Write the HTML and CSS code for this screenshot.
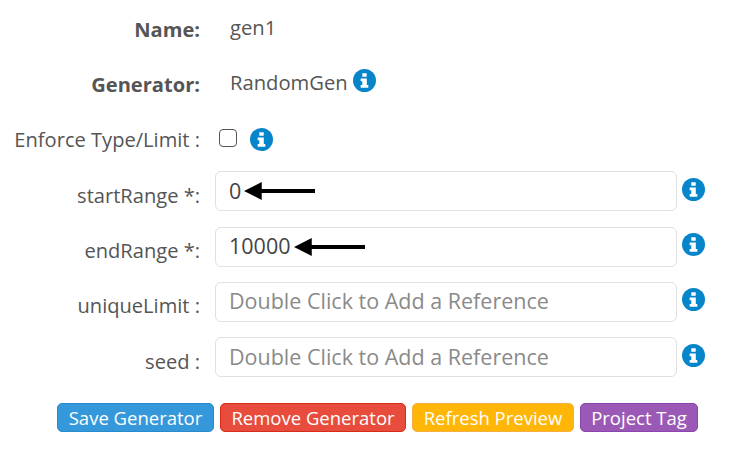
FILE: index.html
```html
<!DOCTYPE html>
<html lang="en">
<head>
    <meta charset="UTF-8">
    <meta name="viewport" content="width=device-width, initial-scale=1.0">
    <title>Generator</title>
    <link rel="stylesheet" href="styles.css">
</head>
<body>
    <svg class="icon-defs" width="0" height="0">
        <symbol id="info" viewBox="0 0 24 24">
            <circle cx="12" cy="12" r="12" fill="#0785cb"/>
            <path fill="#fff" d="M9.7 4.4h4.6v3.7H9.7zM8 10h6.4v6.6H16v2.9H8v-2.9h1.7v-3.7H8z"/>
        </symbol>
    </svg>
    <div class="form">
        <div class="row">
            <label class="name-label strong">Name:</label>
            <span class="value">gen1</span>
        </div>
        <div class="row">
            <label class="name-label strong">Generator:</label>
            <span class="value">RandomGen</span>
            <svg class="info info-inline"><use href="#info"/></svg>
        </div>
        <div class="row">
            <label class="name-label">Enforce Type/Limit :</label>
            <input type="checkbox" class="check">
            <svg class="info info-check"><use href="#info"/></svg>
        </div>
        <div class="row">
            <label class="name-label">startRange *:</label>
            <div class="field">
                <input type="text" class="text-input" value="0">
                <svg class="arrow arrow-start" viewBox="0 0 72 18" preserveAspectRatio="none"><path d="M0 9 18 0v7h54v4H18v7z"/></svg>
            </div>
            <svg class="info info-field"><use href="#info"/></svg>
        </div>
        <div class="row">
            <label class="name-label">endRange *:</label>
            <div class="field">
                <input type="text" class="text-input" value="10000">
                <svg class="arrow arrow-end" viewBox="0 0 72 18" preserveAspectRatio="none"><path d="M0 9 18 0v7h54v4H18v7z"/></svg>
            </div>
            <svg class="info info-field"><use href="#info"/></svg>
        </div>
        <div class="row">
            <label class="name-label">uniqueLimit :</label>
            <div class="field">
                <input type="text" class="text-input" placeholder="Double Click to Add a Reference">
            </div>
            <svg class="info info-field"><use href="#info"/></svg>
        </div>
        <div class="row">
            <label class="name-label">seed :</label>
            <div class="field">
                <input type="text" class="text-input" placeholder="Double Click to Add a Reference">
            </div>
            <svg class="info info-field"><use href="#info"/></svg>
        </div>
        <div class="buttons">
            <button class="btn btn-blue">Save Generator</button>
            <button class="btn btn-red">Remove Generator</button>
            <button class="btn btn-yellow">Refresh Preview</button>
            <button class="btn btn-purple">Project Tag</button>
        </div>
    </div>
</body>
</html>
```

FILE: styles.css
```css
body {
    margin: 0;
    font-family: "Open Sans", sans-serif;
    font-size: 20.1px;
    color: #555;
    background-color: #fff;
}
.icon-defs {
    display: block;
}
.form {
    padding-top: 9px;
}
.row {
    display: flex;
    align-items: center;
    height: 40px;
    margin-bottom: 15.4px;
}
.name-label {
    flex: none;
    width: 200px;
    text-align: right;
}
.strong {
    font-weight: 700;
}
.value {
    margin-left: 30px;
    margin-bottom: 5px;
    font-size: 20.2px;
}
.info {
    flex: none;
    width: 23px;
    height: 23px;
    margin-left: 5px;
}
.info-inline {
    margin-bottom: 8px;
}
.info-check {
    margin-left: 13px;
}
.info-field {
    margin-bottom: 12px;
}
.check {
    appearance: none;
    flex: none;
    width: 18px;
    height: 18px;
    margin: 0 0 4px 19px;
    border: 1.5px solid #555;
    border-radius: 4px;
    background: #fff;
}
.field {
    position: relative;
    flex: none;
    width: 462px;
    height: 40px;
    margin: 0 0 8px 15px;
}
.text-input {
    box-sizing: border-box;
    width: 100%;
    height: 100%;
    padding: 0 13px 2px;
    border: 1.5px solid #e0e0e0;
    border-radius: 6px;
    font-family: inherit;
    font-size: 21.5px;
    color: #444;
}
.text-input::placeholder {
    color: #8a8a8a;
    opacity: 1;
}
.arrow {
    position: absolute;
    top: 11px;
    width: 71px;
    height: 18px;
}
.arrow-start {
    left: 29px;
}
.arrow-end {
    left: 79px;
}
.buttons {
    display: flex;
    gap: 6px;
    padding-left: 57px;
    margin-top: 22px;
}
.btn {
    height: 29px;
    padding: 0;
    border: 1px solid;
    border-radius: 5px;
    font-family: inherit;
    font-size: 18.5px;
    line-height: 1;
    color: #fff;
}
.btn-blue {
    width: 157px;
    background-color: #3498db;
    border-color: #2a8bcc;
}
.btn-red {
    width: 186px;
    background-color: #e74c3c;
    border-color: #d62c1a;
}
.btn-yellow {
    width: 162px;
    background-color: #ffb606;
    border-color: #f5b042;
}
.btn-purple {
    width: 118px;
    background-color: #9b59b6;
    border-color: #8e44ad;
}
```
